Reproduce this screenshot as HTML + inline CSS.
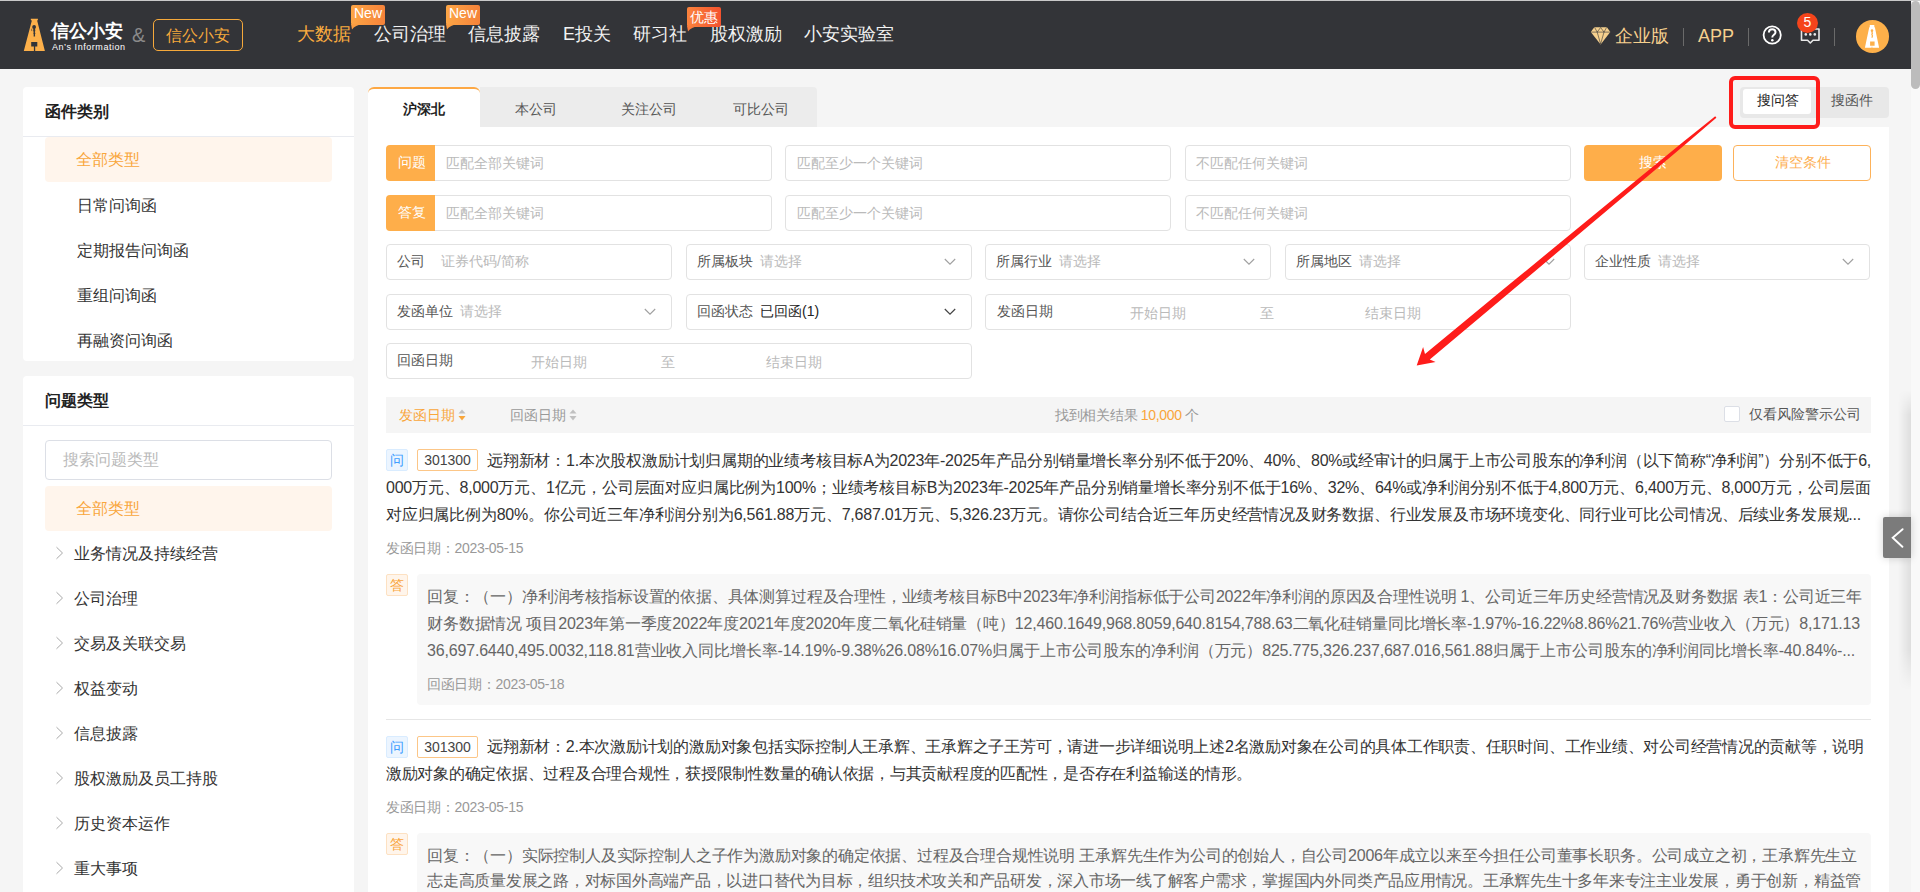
<!DOCTYPE html>
<html><head><meta charset="utf-8">
<style>
*{box-sizing:border-box;margin:0;padding:0}
html,body{width:1920px;height:892px;overflow:hidden}
body{position:relative;background:#f5f5f5;font-family:"Liberation Sans",sans-serif;color:#333}
.abs{position:absolute}
.nw{white-space:nowrap}
#topline{left:0;top:0;width:1920px;height:1px;background:#c9c9c9}
#hdr{left:0;top:1px;width:1911px;height:68px;background:#333438}
#sb{left:1911px;top:1px;width:9px;height:891px;background:#f9f9f9}
#thumb{left:1911px;top:1px;width:9px;height:88px;background:#bcbcbc;border-radius:4.5px}
.nav{top:22px;font-size:18px;line-height:24px;color:#f2f2f2}
.badge{height:20px;font-size:14px;line-height:20px;color:#fff;text-align:center;border-radius:2px}
.lst{font-size:16px;line-height:22px;color:#333}

.box{position:absolute;height:36px;border:1px solid #e2e2e2;border-radius:4px;background:#fff}
.t14{font-size:14px;line-height:20px;white-space:nowrap;position:absolute}
.lbl{color:#555}
.ph{color:#bababa}
.tab{position:absolute;top:89px;height:38px;width:112px;text-align:center;font-size:14px;line-height:40px;color:#555}

.ln{position:absolute;font-size:16px;line-height:27px;height:27px;text-align:justify;text-align-last:justify;white-space:nowrap}
.q{color:#333}
.an{color:#666}
.tagq{position:absolute;width:22px;height:22px;background:#ecf5ff;border:1px solid #d9ecff;border-radius:2px;color:#409eff;font-size:14px;line-height:20px;text-align:center}
.taga{position:absolute;width:22px;height:22px;background:#fff5eb;border:1px solid #fde1c2;border-radius:2px;color:#f9a63b;font-size:14px;line-height:20px;text-align:center}
.code{position:absolute;width:61px;height:22px;background:#fff;border:1px solid #fcc687;border-radius:2px;color:#444;font-size:14px;line-height:20px;text-align:center}
.dt{position:absolute;font-size:14px;line-height:20px;color:#999;white-space:nowrap;letter-spacing:-0.3px}
.sep{width:1px;height:18px;background:#6a6a6a;top:28px}
</style></head><body>
<div id="topline" class="abs"></div>
<div id="hdr" class="abs"></div>
<div id="sb" class="abs"></div>
<div id="thumb" class="abs"></div>

<!-- logo -->
<svg class="abs" style="left:23px;top:18px" width="23" height="34" viewBox="0 0 23 34">
  <path fill="#fdb04a" d="M7.8 0.8 L14.9 0.8 L14.9 1.7 L14.2 2.8 L21.9 32.9 L12.2 32.9 L12.2 28.6 L14.3 28.6 L14.3 23.9 L8.2 23.9 L8.2 28.6 L10.9 28.6 L10.9 32.9 L0.8 32.9 L8.8 2.8 L7.8 1.7 Z"/>
  <circle cx="11.1" cy="8.9" r="1.9" fill="#333438"/>
  <path fill="#333438" d="M10.3 10 L12 10 L12.3 13 L11.8 14 L12.4 15.3 L12 16.5 L12.1 18.5 L10.6 18.5 L10.7 16.5 L10.3 15.3 L10.7 14 L10.2 13 Z"/>
  <path fill="none" stroke="#333438" stroke-width="0.6" d="M8.9 10.6 Q8.3 11.8 8.9 13.1"/>
</svg>
<div class="abs nw" style="left:51px;top:19px;font-size:18px;line-height:24px;font-weight:bold;color:#fff">信公小安</div>
<div class="abs nw" style="left:52px;top:42px;font-size:9px;line-height:10px;color:#fff;letter-spacing:0.55px">An’s Information</div>
<div class="abs nw" style="left:132px;top:23px;font-size:20px;line-height:24px;color:#8a8a8a">&amp;</div>
<div class="abs" style="left:153px;top:19px;width:90px;height:32px;border:1px solid #f6a93b;border-radius:5px;color:#f6a93b;font-size:16px;line-height:32px;text-align:center">信公小安</div>

<!-- nav -->
<div class="abs nav nw" style="left:297px;color:#f9ab3f">大数据</div>
<div class="abs nav nw" style="left:374px">公司治理</div>
<div class="abs nav nw" style="left:468px">信息披露</div>
<div class="abs nav nw" style="left:563px">E投关</div>
<div class="abs nav nw" style="left:633px">研习社</div>
<div class="abs nav nw" style="left:710px">股权激励</div>
<div class="abs nav nw" style="left:804px">小安实验室</div>

<div class="abs badge nw" style="left:351px;top:5px;width:34px;line-height:17px;background:linear-gradient(90deg,#fda646,#f5823a)">New</div>
<svg class="abs" style="left:351px;top:24px" width="12" height="6"><path d="M0 0 L12 0 Q4 1 1 5.5 Z" fill="#fb9d42"/></svg>
<div class="abs badge nw" style="left:446px;top:5px;width:34px;line-height:17px;background:linear-gradient(90deg,#fda646,#f5823a)">New</div>
<svg class="abs" style="left:446px;top:24px" width="12" height="6"><path d="M0 0 L12 0 Q4 1 1 5.5 Z" fill="#fb9d42"/></svg>
<div class="abs badge nw" style="left:687px;top:7px;width:34px;background:linear-gradient(90deg,#fb833d,#f4522e)">优惠</div>
<svg class="abs" style="left:687px;top:26px" width="12" height="6"><path d="M0 0 L12 0 Q4 1 1 5.5 Z" fill="#f97a3b"/></svg>

<!-- right header -->
<svg class="abs" style="left:1590px;top:27px" width="21" height="18" viewBox="0 0 21 18">
  <path fill="#f6d08e" d="M4.3 0.2 L16.9 0.2 L20.3 5.1 L10.6 17.5 L0.8 5.1 Z"/>
  <path fill="none" stroke="#333438" stroke-width="0.6" d="M1.2 5.1 L19.9 5.1 M4.6 0.4 L7.2 5.1 L10.6 0.5 L14 5.1 L16.6 0.4 M7.2 5.1 L10.6 17 L14 5.1"/>
</svg>
<div class="abs nw" style="left:1615px;top:24px;font-size:18px;line-height:24px;color:#f6d08e">企业版</div>
<div class="abs sep" style="left:1683px"></div>
<div class="abs nw" style="left:1698px;top:24px;font-size:18px;line-height:24px;color:#f6d08e">APP</div>
<div class="abs sep" style="left:1748px"></div>
<svg class="abs" style="left:1762px;top:25px" width="20" height="20" viewBox="0 0 20 20">
  <circle cx="10.2" cy="10" r="8.6" fill="none" stroke="#fff" stroke-width="1.8"/>
  <path d="M6.9 7.6 Q6.9 4.3 10.2 4.3 Q13.5 4.3 13.5 7.2 Q13.5 9 11.6 10 Q10.3 10.8 10.3 12.6" fill="none" stroke="#fff" stroke-width="2"/>
  <circle cx="10.3" cy="15.3" r="1.25" fill="#fff"/>
</svg>
<svg class="abs" style="left:1800px;top:28px" width="21" height="18" viewBox="0 0 21 18">
  <path d="M1.5 1 L19 1 L19 12.3 L13 12.3 L10.3 15 L7.6 12.3 L1.5 12.3 Z" fill="none" stroke="#e8e8e8" stroke-width="1.6" stroke-linejoin="round"/>
  <circle cx="5.8" cy="6.4" r="1.3" fill="#e8e8e8"/><circle cx="10.3" cy="6.4" r="1.3" fill="#e8e8e8"/><circle cx="14.8" cy="6.4" r="1.3" fill="#e8e8e8"/>
</svg>
<div class="abs" style="left:1797px;top:13px;width:21px;height:20px;border-radius:50%;background:#f5441b;color:#fff;font-size:14px;line-height:19px;text-align:center">5</div>
<div class="abs sep" style="left:1834px"></div>
<div class="abs" style="left:1855.5px;top:20px;width:33.5px;height:33px;border-radius:50%;background:#fdb04a"></div>
<svg class="abs" style="left:1864px;top:24px" width="16" height="25" viewBox="0 0 16 25">
  <path fill="#fff" fill-rule="evenodd" d="M5.8 1.1 L10.3 1.1 L10.3 2.4 L11 4 L15.1 23.8 L0.9 23.8 L5.1 4 L5.8 2.4 Z M6.1 17.4 L10.6 17.4 L10.6 21.7 L6.1 21.7 Z"/>
  <path fill="#fdb04a" d="M8 5.2 Q9.3 5.2 9.3 6.6 Q9.3 7.5 8.6 7.9 L9 9.6 L8.5 10.4 L9.1 11.8 L8.6 13.8 L7.4 13.8 L7.8 11.8 L7.2 10.4 L7.6 9.6 L7.4 7.9 Q6.7 7.5 6.7 6.6 Q6.7 5.2 8 5.2 Z"/>
  <path fill="#fdb04a" d="M7.6 23.8 L8.4 23.8 L8.2 22.6 L7.8 22.6 Z"/>
</svg>


<!-- left panel 1 -->
<div class="abs" style="left:23px;top:87px;width:331px;height:274px;background:#fff;border-radius:4px"></div>
<div class="abs nw" style="left:45px;top:101px;font-size:16px;line-height:22px;font-weight:bold;color:#222">函件类别</div>
<div class="abs" style="left:23px;top:136px;width:331px;height:1px;background:#e9ebf0"></div>
<div class="abs" style="left:45px;top:137px;width:287px;height:45px;background:#fff5ec;border-radius:4px"></div>
<div class="abs lst nw" style="left:76px;top:149px;color:#f9a63b">全部类型</div>
<div class="abs lst nw" style="left:77px;top:195px">日常问询函</div>
<div class="abs lst nw" style="left:77px;top:240px">定期报告问询函</div>
<div class="abs lst nw" style="left:77px;top:285px">重组问询函</div>
<div class="abs lst nw" style="left:77px;top:330px">再融资问询函</div>

<!-- left panel 2 -->
<div class="abs" style="left:23px;top:376px;width:331px;height:520px;background:#fff;border-radius:4px"></div>
<div class="abs nw" style="left:45px;top:390px;font-size:16px;line-height:22px;font-weight:bold;color:#222">问题类型</div>
<div class="abs" style="left:23px;top:425px;width:331px;height:1px;background:#e9ebf0"></div>
<div class="abs" style="left:45px;top:440px;width:287px;height:40px;border:1px solid #dcdfe6;border-radius:4px"></div>
<div class="abs lst nw" style="left:63px;top:449px;color:#bababa">搜索问题类型</div>
<div class="abs" style="left:45px;top:486px;width:287px;height:45px;background:#fff5ec;border-radius:4px"></div>
<div class="abs lst nw" style="left:76px;top:498px;color:#f9a63b">全部类型</div>
<svg class="abs" style="left:55px;top:546px" width="10" height="14" viewBox="0 0 10 14"><path d="M1.5 1.2 L7.5 7 L1.5 12.8" fill="none" stroke="#a8a8a8" stroke-width="1"/></svg>
<div class="abs lst nw" style="left:74px;top:543px">业务情况及持续经营</div>
<svg class="abs" style="left:55px;top:591px" width="10" height="14" viewBox="0 0 10 14"><path d="M1.5 1.2 L7.5 7 L1.5 12.8" fill="none" stroke="#a8a8a8" stroke-width="1"/></svg>
<div class="abs lst nw" style="left:74px;top:588px">公司治理</div>
<svg class="abs" style="left:55px;top:636px" width="10" height="14" viewBox="0 0 10 14"><path d="M1.5 1.2 L7.5 7 L1.5 12.8" fill="none" stroke="#a8a8a8" stroke-width="1"/></svg>
<div class="abs lst nw" style="left:74px;top:633px">交易及关联交易</div>
<svg class="abs" style="left:55px;top:681px" width="10" height="14" viewBox="0 0 10 14"><path d="M1.5 1.2 L7.5 7 L1.5 12.8" fill="none" stroke="#a8a8a8" stroke-width="1"/></svg>
<div class="abs lst nw" style="left:74px;top:678px">权益变动</div>
<svg class="abs" style="left:55px;top:726px" width="10" height="14" viewBox="0 0 10 14"><path d="M1.5 1.2 L7.5 7 L1.5 12.8" fill="none" stroke="#a8a8a8" stroke-width="1"/></svg>
<div class="abs lst nw" style="left:74px;top:723px">信息披露</div>
<svg class="abs" style="left:55px;top:771px" width="10" height="14" viewBox="0 0 10 14"><path d="M1.5 1.2 L7.5 7 L1.5 12.8" fill="none" stroke="#a8a8a8" stroke-width="1"/></svg>
<div class="abs lst nw" style="left:74px;top:768px">股权激励及员工持股</div>
<svg class="abs" style="left:55px;top:816px" width="10" height="14" viewBox="0 0 10 14"><path d="M1.5 1.2 L7.5 7 L1.5 12.8" fill="none" stroke="#a8a8a8" stroke-width="1"/></svg>
<div class="abs lst nw" style="left:74px;top:813px">历史资本运作</div>
<svg class="abs" style="left:55px;top:861px" width="10" height="14" viewBox="0 0 10 14"><path d="M1.5 1.2 L7.5 7 L1.5 12.8" fill="none" stroke="#a8a8a8" stroke-width="1"/></svg>
<div class="abs lst nw" style="left:74px;top:858px">重大事项</div>


<!-- main panel -->
<div class="abs" style="left:480px;top:87px;width:337px;height:40px;background:#ececec;border-radius:0 4px 0 0"></div>
<div class="abs" style="left:368px;top:87px;width:112px;height:40px;background:#fff;border-top:2px solid #fda844;border-radius:6px 6px 0 0"></div>
<div class="abs" style="left:368px;top:127px;width:1521px;height:770px;background:#fff"></div>
<div class="tab" style="left:368px;color:#222;font-weight:bold">沪深北</div>
<div class="tab" style="left:480px">本公司</div>
<div class="tab" style="left:593px">关注公司</div>
<div class="tab" style="left:705px">可比公司</div>

<div class="abs" style="left:1740px;top:87px;width:149px;height:31px;background:#e8e8e8;border-radius:4px"></div>
<div class="abs" style="left:1743px;top:89px;width:68px;height:25px;background:#fff;border-radius:3px"></div>
<div class="t14" style="left:1757px;top:90px;color:#222">搜问答</div>
<div class="t14" style="left:1831px;top:90px;color:#555">搜函件</div>

<!-- row1 -->
<div class="abs" style="left:386px;top:145px;width:49px;height:36px;background:#feae4a;border-radius:4px 0 0 4px"></div>
<div class="t14" style="left:398px;top:152px;color:#fff">问题</div>
<div class="box" style="left:435px;top:145px;width:337px;border-left:none;border-radius:0 4px 4px 0"></div>
<div class="t14 ph" style="left:446px;top:153px">匹配全部关键词</div>
<div class="box" style="left:785px;top:145px;width:386px"></div>
<div class="t14 ph" style="left:797px;top:153px">匹配至少一个关键词</div>
<div class="box" style="left:1185px;top:145px;width:386px"></div>
<div class="t14 ph" style="left:1196px;top:153px">不匹配任何关键词</div>
<div class="abs" style="left:1584px;top:145px;width:138px;height:36px;background:#feae4a;border-radius:4px"></div>
<div class="t14" style="left:1639px;top:152px;color:#fff">搜索</div>
<div class="abs" style="left:1733px;top:145px;width:138px;height:36px;border:1px solid #fdb25a;border-radius:4px"></div>
<div class="t14" style="left:1775px;top:152px;color:#fdae4f">清空条件</div>

<!-- row2 -->
<div class="abs" style="left:386px;top:195px;width:49px;height:36px;background:#feae4a;border-radius:4px 0 0 4px"></div>
<div class="t14" style="left:398px;top:202px;color:#fff">答复</div>
<div class="box" style="left:435px;top:195px;width:337px;border-left:none;border-radius:0 4px 4px 0"></div>
<div class="t14 ph" style="left:446px;top:203px">匹配全部关键词</div>
<div class="box" style="left:785px;top:195px;width:386px"></div>
<div class="t14 ph" style="left:797px;top:203px">匹配至少一个关键词</div>
<div class="box" style="left:1185px;top:195px;width:386px"></div>
<div class="t14 ph" style="left:1196px;top:203px">不匹配任何关键词</div>
<div class="box" style="left:386px;top:244px;width:286px"></div>
<div class="t14 lbl" style="left:397px;top:251px">公司</div>
<div class="t14 ph" style="left:441px;top:251px">证券代码/简称</div>
<div class="box" style="left:686px;top:244px;width:286px"></div>
<div class="t14 lbl" style="left:697px;top:251px">所属板块</div>
<div class="t14 ph" style="left:760px;top:251px">请选择</div>
<svg class="abs" style="left:944px;top:258px" width="12" height="8" viewBox="0 0 12 8"><path d="M0.8 1 L6 6.2 L11.2 1" fill="none" stroke="#a0a0a0" stroke-width="1.1"/></svg>
<div class="box" style="left:985px;top:244px;width:286px"></div>
<div class="t14 lbl" style="left:996px;top:251px">所属行业</div>
<div class="t14 ph" style="left:1059px;top:251px">请选择</div>
<svg class="abs" style="left:1243px;top:258px" width="12" height="8" viewBox="0 0 12 8"><path d="M0.8 1 L6 6.2 L11.2 1" fill="none" stroke="#a0a0a0" stroke-width="1.1"/></svg>
<div class="box" style="left:1285px;top:244px;width:286px"></div>
<div class="t14 lbl" style="left:1296px;top:251px">所属地区</div>
<div class="t14 ph" style="left:1359px;top:251px">请选择</div>
<svg class="abs" style="left:1543px;top:258px" width="12" height="8" viewBox="0 0 12 8"><path d="M0.8 1 L6 6.2 L11.2 1" fill="none" stroke="#a0a0a0" stroke-width="1.1"/></svg>
<div class="box" style="left:1584px;top:244px;width:286px"></div>
<div class="t14 lbl" style="left:1595px;top:251px">企业性质</div>
<div class="t14 ph" style="left:1658px;top:251px">请选择</div>
<svg class="abs" style="left:1842px;top:258px" width="12" height="8" viewBox="0 0 12 8"><path d="M0.8 1 L6 6.2 L11.2 1" fill="none" stroke="#a0a0a0" stroke-width="1.1"/></svg>
<div class="box" style="left:386px;top:294px;width:286px"></div>
<div class="t14 lbl" style="left:397px;top:301px">发函单位</div>
<div class="t14 ph" style="left:460px;top:301px">请选择</div>
<svg class="abs" style="left:644px;top:308px" width="12" height="8" viewBox="0 0 12 8"><path d="M0.8 1 L6 6.2 L11.2 1" fill="none" stroke="#a0a0a0" stroke-width="1.1"/></svg>
<div class="box" style="left:686px;top:294px;width:286px"></div>
<div class="t14 lbl" style="left:697px;top:301px">回函状态</div>
<div class="t14" style="left:760px;top:301px;color:#222">已回函(1)</div>
<svg class="abs" style="left:944px;top:308px" width="12" height="8" viewBox="0 0 12 8"><path d="M0.8 1 L6 6.2 L11.2 1" fill="none" stroke="#444" stroke-width="1.2"/></svg>
<div class="box" style="left:985px;top:294px;width:586px"></div>
<div class="t14 lbl" style="left:997px;top:301px">发函日期</div>
<div class="t14 ph" style="left:1130px;top:303px">开始日期</div>
<div class="t14 ph" style="left:1260px;top:303px">至</div>
<div class="t14 ph" style="left:1365px;top:303px">结束日期</div>
<!-- row5 -->
<div class="box" style="left:386px;top:343px;width:586px"></div>
<div class="t14 lbl" style="left:397px;top:350px">回函日期</div>
<div class="t14 ph" style="left:531px;top:352px">开始日期</div>
<div class="t14 ph" style="left:661px;top:352px">至</div>
<div class="t14 ph" style="left:766px;top:352px">结束日期</div>

<!-- sort bar -->
<div class="abs" style="left:386px;top:397px;width:1485px;height:36px;background:#f5f5f5"></div>
<div class="t14" style="left:399px;top:405px;color:#f9a63b">发函日期</div>
<svg class="abs" style="left:458px;top:409px" width="8" height="12" viewBox="0 0 8 12"><path d="M4 0.5 L7.5 4.5 L0.5 4.5 Z" fill="#c0c0c0"/><path d="M4 11.5 L7.5 7 L0.5 7 Z" fill="#f9a63b"/></svg>
<div class="t14" style="left:510px;top:405px;color:#999">回函日期</div>
<svg class="abs" style="left:569px;top:409px" width="8" height="12" viewBox="0 0 8 12"><path d="M4 0.5 L7.5 4.5 L0.5 4.5 Z" fill="#c0c0c0"/><path d="M4 11.5 L7.5 7 L0.5 7 Z" fill="#c0c0c0"/></svg>
<div class="t14" style="left:1055px;top:405px;color:#999;letter-spacing:-0.3px">找到相关结果 <span style="color:#f9a63b">10,000</span> 个</div>
<div class="abs" style="left:1724px;top:406px;width:16px;height:16px;background:#fff;border:1px solid #dcdfe6;border-radius:2px"></div>
<div class="t14" style="left:1749px;top:404px;color:#555">仅看风险警示公司</div>

<!-- results -->
<div class="tagq" style="left:386px;top:449px">问</div>
<div class="code" style="left:417px;top:449px">301300</div>
<div class="ln q" style="left:487px;top:447px;width:1384px;letter-spacing:-0.238px">远翔新材：1.本次股权激励计划归属期的业绩考核目标A为2023年-2025年产品分别销量增长率分别不低于20%、40%、80%或经审计的归属于上市公司股东的净利润（以下简称“净利润”）分别不低于6,</div>
<div class="ln q" style="left:386px;top:474px;width:1485px;letter-spacing:-0.226px">000万元、8,000万元、1亿元，公司层面对应归属比例为100%；业绩考核目标B为2023年-2025年产品分别销量增长率分别不低于16%、32%、64%或净利润分别不低于4,800万元、6,400万元、8,000万元，公司层面</div>
<div class="ln q" style="left:386px;top:501px;width:1475px;letter-spacing:-0.222px">对应归属比例为80%。你公司近三年净利润分别为6,561.88万元、7,687.01万元、5,326.23万元。请你公司结合近三年历史经营情况及财务数据、行业发展及市场环境变化、同行业可比公司情况、后续业务发展规...</div>
<div class="dt" style="left:386px;top:538px">发函日期：2023-05-15</div>
<div class="taga" style="left:386px;top:574px">答</div>
<div class="abs" style="left:417px;top:574px;width:1454px;height:131px;background:#f8f8f8;border-radius:4px"></div>
<div class="ln an" style="left:427px;top:583px;width:1435px;letter-spacing:-0.212px">回复：（一）净利润考核指标设置的依据、具体测算过程及合理性，业绩考核目标B中2023年净利润指标低于公司2022年净利润的原因及合理性说明 1、公司近三年历史经营情况及财务数据 表1：公司近三年</div>
<div class="ln an" style="left:427px;top:610px;width:1433px;letter-spacing:-0.195px">财务数据情况 项目2023年第一季度2022年度2021年度2020年度二氧化硅销量（吨）12,460.1649,968.8059,640.8154,788.63二氧化硅销量同比增长率-1.97%-16.22%8.86%21.76%营业收入（万元）8,171.13</div>
<div class="ln an" style="left:427px;top:637px;width:1428px;letter-spacing:-0.177px">36,697.6440,495.0032,118.81营业收入同比增长率-14.19%-9.38%26.08%16.07%归属于上市公司股东的净利润（万元）825.775,326.237,687.016,561.88归属于上市公司股东的净利润同比增长率-40.84%-...</div>
<div class="dt" style="left:427px;top:674px">回函日期：2023-05-18</div>
<div class="abs" style="left:386px;top:719px;width:1485px;height:1px;background:#e6e6e6"></div>
<div class="tagq" style="left:386px;top:736px">问</div>
<div class="code" style="left:417px;top:736px">301300</div>
<div class="ln q" style="left:487px;top:733px;width:1377px;letter-spacing:-0.272px">远翔新材：2.本次激励计划的激励对象包括实际控制人王承辉、王承辉之子王芳可，请进一步详细说明上述2名激励对象在公司的具体工作职责、任职时间、工作业绩、对公司经营情况的贡献等，说明</div>
<div class="ln q" style="left:386px;top:760px;width:866px;letter-spacing:-0.309px">激励对象的确定依据、过程及合理合规性，获授限制性数量的确认依据，与其贡献程度的匹配性，是否存在利益输送的情形。</div>
<div class="dt" style="left:386px;top:797px">发函日期：2023-05-15</div>
<div class="taga" style="left:386px;top:833px">答</div>
<div class="abs" style="left:417px;top:833px;width:1454px;height:80px;background:#f8f8f8;border-radius:4px"></div>
<div class="ln an" style="left:427px;top:842px;width:1430px;letter-spacing:-0.226px">回复：（一）实际控制人及实际控制人之子作为激励对象的确定依据、过程及合理合规性说明 王承辉先生作为公司的创始人，自公司2006年成立以来至今担任公司董事长职务。公司成立之初，王承辉先生立</div>
<div class="ln an" style="left:427px;top:867px;width:1434px;letter-spacing:-0.275px">志走高质量发展之路，对标国外高端产品，以进口替代为目标，组织技术攻关和产品研发，深入市场一线了解客户需求，掌握国内外同类产品应用情况。王承辉先生十多年来专注主业发展，勇于创新，精益管</div>

<!-- collapse tab & shadow -->
<div class="abs" style="left:1898px;top:390px;width:13px;height:300px;background:linear-gradient(90deg,rgba(0,0,0,0),rgba(0,0,0,0.09));-webkit-mask-image:linear-gradient(180deg,transparent 0,#000 25px,#000 260px,transparent 300px)"></div>
<div class="abs" style="left:1883px;top:517px;width:28px;height:41px;background:#7b7b7b;border-radius:2px 0 0 2px;box-shadow:0 0 8px rgba(0,0,0,0.18)"></div>
<svg class="abs" style="left:1890px;top:528px" width="15" height="20" viewBox="0 0 15 20"><path d="M12.6 1.2 L2.7 9.8 L12.4 18.8" fill="none" stroke="#fff" stroke-width="1.9" stroke-linecap="round"/></svg>

<!-- annotation -->
<div class="abs" style="left:1729px;top:76px;width:91px;height:53px;border:4px solid #fe1c1a;border-radius:6px"></div>
<svg class="abs" style="left:0;top:0" width="1920" height="892" viewBox="0 0 1920 892">
  <path fill="#fe1c1a" d="M1715.2 116.3 L1705.9 123.8 L1684.0 141.3 L1637.5 179.2 L1575.6 230.0 L1506.1 287.1 L1425.0 353.9 L1423.1 346.9 L1416.7 365.6 L1435.6 361.9 L1429.8 359.5 L1510.2 292.0 L1579.1 234.1 L1640.3 182.6 L1686.1 143.8 L1707.3 125.5 L1716.4 117.7 Z"/>
</svg>


</body></html>
